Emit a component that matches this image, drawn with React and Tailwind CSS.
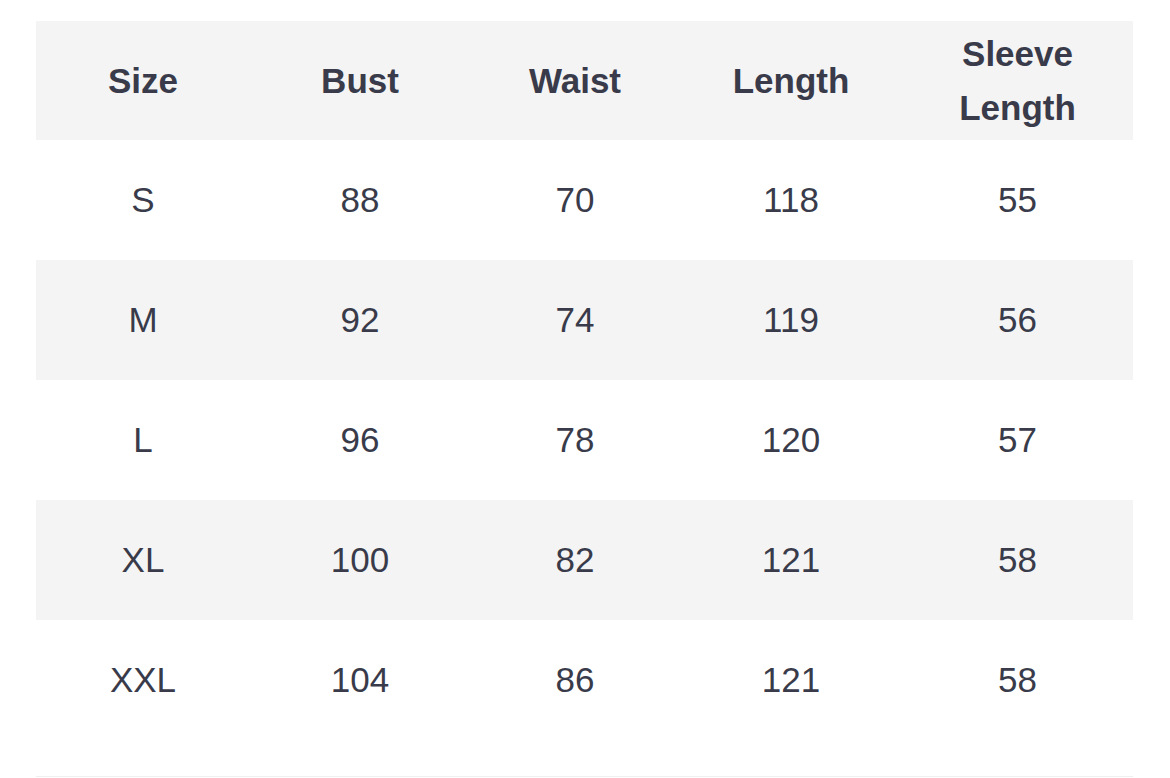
export default function App() {
  const header = ["Size", "Bust", "Waist", "Length", "Sleeve Length"];
  const rows = [
    ["S", "88", "70", "118", "55"],
    ["M", "92", "74", "119", "56"],
    ["L", "96", "78", "120", "57"],
    ["XL", "100", "82", "121", "58"],
    ["XXL", "104", "86", "121", "58"],
  ];
  const cols = "grid grid-cols-[214px_220px_210px_222px_231px]";
  return (
    <div className="w-[1170px] h-[778px] bg-white overflow-hidden pt-[21px] pl-[36px] text-[#393b4a] [font-family:'Liberation_Sans',Arial,sans-serif]">
      <div className="w-[1097px] border-b border-[#efefef]">
        <div className={`${cols} h-[119px] bg-[#f4f4f4] items-center`}>
          {header.map((h, i) => (
            <div key={i} className="text-center font-bold text-[35px] leading-[54px] px-10">
              {h}
            </div>
          ))}
        </div>
        {rows.map((r, ri) => (
          <div
            key={ri}
            className={`${cols} h-[120px] items-center ${ri % 2 === 1 ? "bg-[#f4f4f4]" : "bg-white"}`}
          >
            {r.map((c, ci) => (
              <div key={ci} className="text-center text-[35px] leading-[40px]">
                {c}
              </div>
            ))}
          </div>
        ))}
        <div className="h-[36px]" />
      </div>
    </div>
  );
}
